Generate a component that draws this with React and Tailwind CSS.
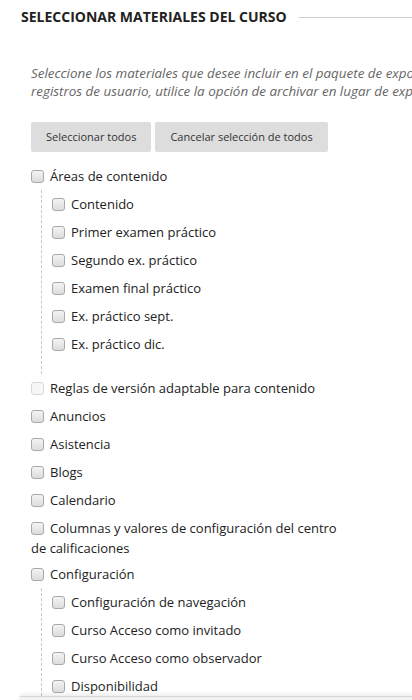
const top = [
  { label: "Áreas de contenido", children: ["Contenido", "Primer examen práctico", "Segundo ex. práctico", "Examen final práctico", "Ex. práctico sept.", "Ex. práctico dic."] },
  { label: "Reglas de versión adaptable para contenido", disabled: true },
  { label: "Anuncios" },
  { label: "Asistencia" },
  { label: "Blogs" },
  { label: "Calendario" },
  { label: "Columnas y valores de configuración del centro de calificaciones", tight: true },
  { label: "Configuración", children: ["Configuración de navegación", "Curso Acceso como invitado", "Curso Acceso como observador", "Disponibilidad"] },
];

const Box = ({ disabled }) => (
  <span
    className={`inline-block align-[-2px] w-[13px] h-[13px] rounded-[3px] border mr-[6px] ${
      disabled ? "border-[#d8d8d8] bg-[#f7f7f7]" : "border-[#a9a9a9] bg-gradient-to-b from-[#f4f4f4] to-[#dcdcdc]"
    }`}
  />
);

const Item = ({ label, disabled, tight }) => (
  <div className={`pt-[4px] leading-[20px] text-[13px] text-[#222] ${tight ? "pb-[2px]" : "pb-[4px]"}`}>
    <Box disabled={disabled} />
    {label}
  </div>
);

export default function App() {
  return (
    <div className="relative w-[412px] h-[700px] overflow-hidden bg-white font-['Open_Sans',sans-serif]">
      <div className="w-[700px]">
        <div className="flex items-center pl-[21px] pt-[7px]">
          <h2 className="text-[14px] font-bold text-[#222] leading-[20px] whitespace-nowrap">SELECCIONAR MATERIALES DEL CURSO</h2>
          <div className="flex-1 ml-[12px] h-px bg-[#cccccc]" />
        </div>

        <p className="pl-[31px] mt-[37px] text-[13.4px] italic text-[#666] leading-[18px] whitespace-nowrap">
          Seleccione los materiales que desee incluir en el paquete de exportación. Para incluir los
          <br />
          registros de usuario, utilice la opción de archivar en lugar de exportar.
        </p>

        <div className="flex gap-[4px] pl-[31px] mt-[22px]">
          <button className="h-[30px] px-[15px] bg-[#dddddd] rounded-[2px] text-[11px] text-[#333]">Seleccionar todos</button>
          <button className="h-[30px] px-[15px] bg-[#dddddd] rounded-[2px] text-[11px] text-[#333]">Cancelar selección de todos</button>
        </div>

        <div className="pl-[31px] mt-[10px] w-[342px]">
          {top.map((t) => (
            <div key={t.label}>
              <Item label={t.label} disabled={t.disabled} tight={t.tight} />
              {t.children && (
                <div className="ml-[10px] border-l border-dashed border-[#c8c8c8] pl-[10px] pb-[16px]">
                  {t.children.map((c) => (
                    <Item key={c} label={c} />
                  ))}
                </div>
              )}
            </div>
          ))}
        </div>
      </div>

      <div className="absolute left-[20px] right-0 top-[696px] h-[20px] bg-[#f2f2f2] border-t border-[#d6d6d6] shadow-[0_-2px_4px_rgba(0,0,0,0.08)]" />
    </div>
  );
}
